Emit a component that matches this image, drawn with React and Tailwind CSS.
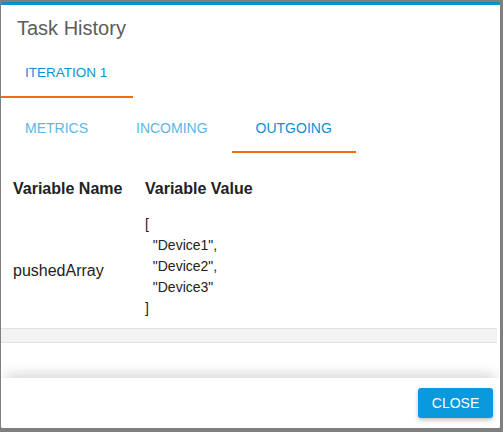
import { useState } from "react";

const variables = [
  { name: "pushedArray", value: ["Device1", "Device2", "Device3"] },
];

const subTabs = ["Metrics", "Incoming", "Outgoing"];

const TaskHistory = () => {
  const [active, setActive] = useState("Outgoing");

  return (
    <div
      className="min-h-[432px] bg-[#7f7f7f] pl-px pr-[3px] pt-[2px] pb-[4px]"
      style={{ fontFamily: '"Liberation Sans", Arial, sans-serif' }}
    >
      <div className="flex h-[426px] flex-col overflow-hidden rounded-t-[3px] rounded-b-[2px] border-t-[3px] border-[#0a8fd4] bg-white">
        <div className="flex-1">
          <h1 className="px-4 pt-[11px] pb-[10px] text-[20px] leading-6 text-[#5c5c5c]">
            Task History
          </h1>

          {/* iteration tabs */}
          <div className="flex">
            <button className="flex h-12 w-[132px] items-center border-b-2 border-[#f26b0f] px-6 text-[13.5px] uppercase text-[#0d8fd5]">
              Iteration 1
            </button>
          </div>

          {/* detail tabs */}
          <div className="mt-[7px] flex">
            {subTabs.map((tab) => (
              <button
                key={tab}
                onClick={() => setActive(tab)}
                className={
                  active === tab
                    ? "flex h-12 items-center border-b-2 border-[#f26b0f] px-6 text-[14px] uppercase text-[#0d8fd5]"
                    : "flex h-12 items-center border-b-2 border-transparent px-6 text-[14px] uppercase text-[#5cb6e6]"
                }
              >
                {tab}
              </button>
            ))}
          </div>

          <table className="w-full border-collapse text-left text-[#222]">
            <thead>
              <tr>
                <th className="w-[144px] pt-[26px] pb-[15px] pl-[12px] text-[16px] leading-5 font-bold">
                  Variable Name
                </th>
                <th className="pt-[26px] pb-[15px] text-[16px] leading-5 font-bold">
                  Variable Value
                </th>
              </tr>
            </thead>
            <tbody>
              {variables.map((v) => (
                <tr key={v.name}>
                  <td className="pl-[12px] align-middle text-[16px] leading-5">
                    {v.name}
                  </td>
                  <td className="pb-[9px]">
                    <pre
                      className="text-[14px] leading-[21px] whitespace-pre"
                      style={{ fontFamily: '"Liberation Sans", Arial, sans-serif' }}
                    >
                      {JSON.stringify(v.value, null, 2)}
                    </pre>
                  </td>
                </tr>
              ))}
            </tbody>
          </table>

          <div className="mr-[3px] h-[15px] border-y border-[#e2e2e2] bg-[#f3f3f3]" />
        </div>

        <div className="flex h-[50px] items-center justify-end bg-white pr-[7px] shadow-[0_-8px_14px_-5px_rgba(0,0,0,0.18)]">
          <button className="h-[30px] w-[75px] rounded-[3px] bg-[#0a99dc] text-[14px] text-white uppercase shadow-[0_2px_4px_rgba(0,0,0,0.25)]">
            Close
          </button>
        </div>
      </div>
    </div>
  );
};

export default TaskHistory;
